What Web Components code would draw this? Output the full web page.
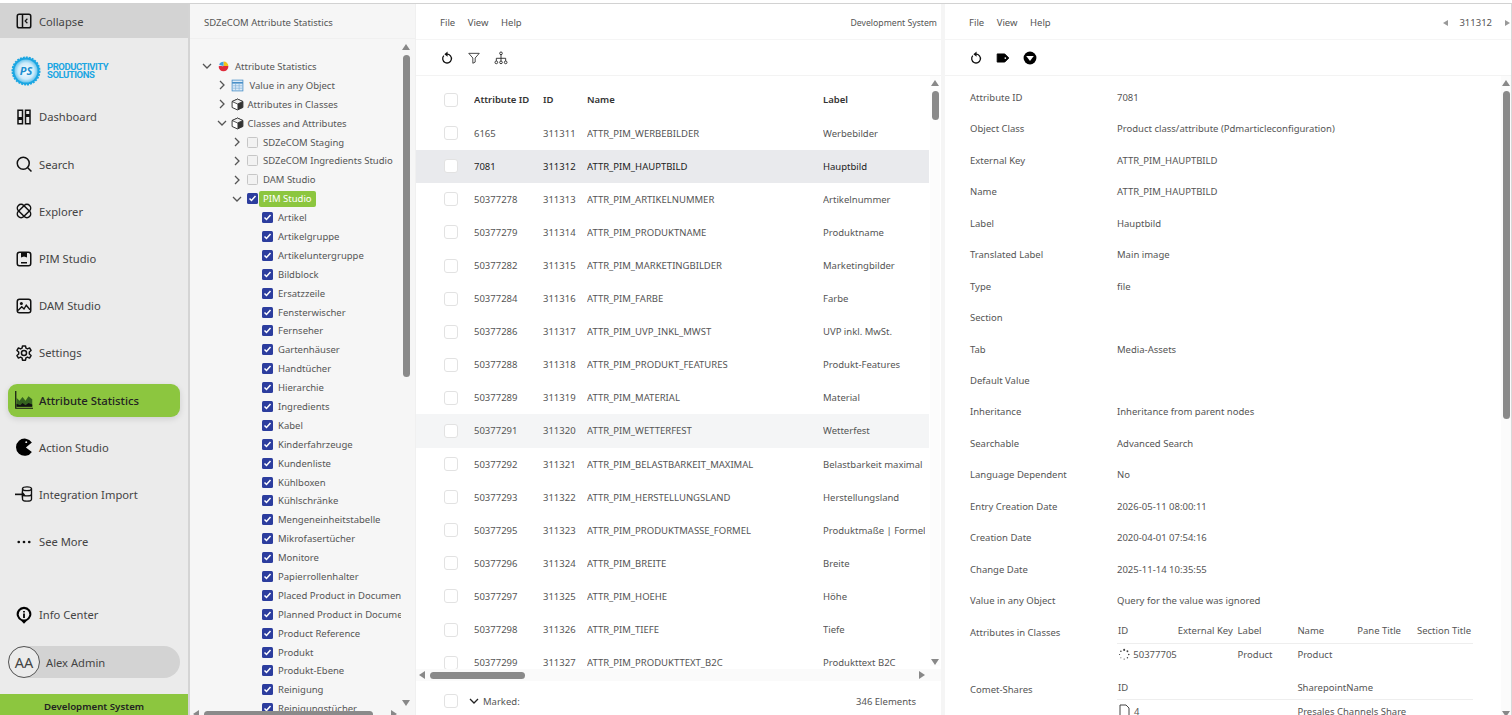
<!DOCTYPE html>
<html>
<head>
<meta charset="utf-8">
<title>Attribute Statistics</title>
<style>
  html, body { margin: 0; height: 100%; overflow: hidden; background: #fff; }
  body { font-family: "Noto Sans", "Open Sans", sans-serif; color: #444; }
  stat-app { height: 715px; }
</style>
</head>
<body>
<stat-app></stat-app>
<script>
const icons = {
  collapse: '<rect x="3" y="3" width="18" height="18" rx="2.5" fill="none" stroke="#111" stroke-width="2"/><path d="M10 3v18" stroke="#111" stroke-width="2"/><path d="M16.5 9l-3 3 3 3" fill="none" stroke="#111" stroke-width="1.6"/>',
  dashboard: '<path d="M4 3h6v10H4zM14 3h6v6h-6zM14 11h6v10h-6zM4 15h6v6H4z" fill="none" stroke="#111" stroke-width="2"/>',
  search: '<circle cx="11" cy="11" r="8" fill="none" stroke="#111" stroke-width="2"/><path d="M17 17l5 5" stroke="#111" stroke-width="2"/>',
  explorer: '<g fill="none" stroke="#111" stroke-width="2"><rect x="1.500" y="7" width="21" height="10" rx="5" transform="rotate(45 12 12)"/><rect x="1.500" y="7" width="21" height="10" rx="5" transform="rotate(-45 12 12)"/></g>',
  pim: '<rect x="3" y="3" width="18" height="18" rx="3" fill="none" stroke="#111" stroke-width="2"/><path d="M8 3h8v7l-4-1.500L8 10zM8 16h8v2H8z" fill="#111"/>',
  dam: '<rect x="3" y="3" width="18" height="18" rx="3" fill="none" stroke="#111" stroke-width="2"/><circle cx="8.500" cy="8.500" r="2" fill="#111"/><path d="M4 18l5-5 3 3 3-5 5 6" fill="none" stroke="#111" stroke-width="1.800"/>',
  settings: '<circle cx="12" cy="12" r="3.400" fill="none" stroke="#111" stroke-width="2"/><path d="M10 2.500h4l.6 3 2 1 2.800-1.300 2 3.400-2.300 2v2.800l2.300 2-2 3.400-2.800-1.300-2 1-.6 3h-4l-.6-3-2-1-2.800 1.300-2-3.400 2.300-2v-2.800l-2.300-2 2-3.400 2.800 1.300 2-1z" fill="none" stroke="#111" stroke-width="2" stroke-linejoin="round"/>',
  stats: '<path d="M1 0v23h23" fill="none" stroke="#111" stroke-width="1.600"/><path d="M2 21V9l4 4 4-5 4 5 4-6 5 4v10z" fill="#35641f"/><path d="M2 21v-4l5 2 3-3 4 3 4-3 5 2v3z" fill="#111"/>',
  action: '<path d="M22.500 6A11.500 11.500 0 1 0 22.500 18.500L14.500 12.500z" fill="#000"/><circle cx="15" cy="5.500" r="1.300" fill="#ebebeb"/>',
  integration: '<ellipse cx="16" cy="5" rx="6" ry="2.500" fill="none" stroke="#111" stroke-width="1.800"/><path d="M10 5v14c0 1.400 2.700 2.500 6 2.500s6-1.100 6-2.500V5M10 12c0 1.400 2.700 2.500 6 2.500s6-1.100 6-2.500" fill="none" stroke="#111" stroke-width="1.800"/><path d="M0 12.500h12" stroke="#111" stroke-width="2.200"/><path d="M9 8.500l4.500 4-4.500 4z" fill="#111"/>',
  more: '<circle cx="5" cy="12" r="1.800" fill="#111"/><circle cx="12" cy="12" r="1.800" fill="#111"/><circle cx="19" cy="12" r="1.800" fill="#111"/>',
  info: '<path d="M12 23.500l-3.500-3.600A9.800 9.800 0 1 1 15.500 19.900z" fill="#000"/><circle cx="12" cy="11" r="7" fill="#ebebeb"/><path d="M10.800 10h2.400v6h-2.400zM10.800 6.500h2.400v2.200h-2.400z" fill="#000"/>',
  reload: '<path d="M6.500 8a7.500 7.500 0 1 0 5.500-2.500h-1" fill="none" stroke="#111" stroke-width="2.200"/><path d="M13 1v9L7.500 5.500z" fill="#111"/>',
  filter: '<path d="M3 4h18l-7 8v7l-4 2v-9z" fill="none" stroke="#222" stroke-width="1.400" stroke-linejoin="round"/>',
  hierarchy: '<g fill="none" stroke="#222" stroke-width="1.500"><circle cx="12" cy="4" r="2.300"/><circle cx="4" cy="19.500" r="2.300"/><circle cx="12" cy="19.500" r="2.300"/><circle cx="20" cy="19.500" r="2.300"/><path d="M12 6.500v10.500M4 17v-4.500h16V17"/></g>',
  tag: '<path d="M2 5h13l7 7-7 7H2z" fill="#000" stroke="#000" stroke-linejoin="round" stroke-width="1.500"/><circle cx="16" cy="12" r="1.500" fill="#fff"/>',
  down: '<circle cx="12" cy="12" r="11" fill="#000"/><path d="M5.500 8.500h13L12 17z" fill="#fff"/>',
  pie: '<path d="M3 12a9 9 0 0 0 18 0c0-2-7-3-9-1s-6-1-9 1z" fill="#df2b3b"/><path d="M12 3a8.500 8.500 0 0 1 9 8l-9 0z" fill="#f1c21b"/><path d="M12 3a8.500 8.500 0 0 0-8 6l8 2z" fill="#3f9fe0"/>',
  grid: '<rect x="2" y="2" width="20" height="20" fill="#dcebf8" stroke="#4a90c8" stroke-width="1.500"/><path d="M2 7h20" stroke="#4a90c8" stroke-width="3"/><path d="M8.500 8v13M15 8v13M3 12.500h18M3 17h18" stroke="#7fb0d8" stroke-width="1.200"/>',
  cube: '<path d="M12 2L22 6.500v11L12 22 2 17.500v-11z" fill="#fff" stroke="#333" stroke-width="1.800" stroke-linejoin="round"/><path d="M2 6.500L12 11l10-4.500L12 2z" fill="#eee" stroke="#333" stroke-width="1.500" stroke-linejoin="round"/><path d="M12 11v11l10-4.500v-11z" fill="#333"/>'
};
const svg = (name, size) => `<svg width="${size}" height="${size}" viewBox="0 0 24 24" aria-hidden="true">${icons[name]}</svg>`;

class NavItem extends HTMLElement {
  constructor() {
    super();
    this.attachShadow({mode: "open"});
  }
  connectedCallback() {
    this.shadowRoot.innerHTML = `
      <style>
        :host { display: flex; align-items: center; height: 33px; margin: 7.100px 8px; padding-left: 7px; border-radius: 9px; gap: 6px; font-size: 11.200px; color: #444; box-sizing: border-box; }
        :host([active]) { background: #8cc63f; color: #222; font-weight: 500; font-size: 11.300px; box-shadow: 0 2px 6px rgba(0,0,0,.12); }
        svg { flex: none; display: block; }
      </style>
      ${svg(this.getAttribute("icon"), 18)}<slot></slot>`;
  }
}
customElements.define("nav-item", NavItem);

class SideBar extends HTMLElement {
  constructor() {
    super();
    this.attachShadow({mode: "open"});
    const nav = [["dashboard","Dashboard"],["search","Search"],["explorer","Explorer"],["pim","PIM Studio"],["dam","DAM Studio"],["settings","Settings"],["stats","Attribute Statistics"],["action","Action Studio"],["integration","Integration Import"],["more","See More"]];
    this.shadowRoot.innerHTML = `
      <style>
        :host { display: flex; flex-direction: column; width: 190px; box-sizing: border-box; background: #ebebeb; border-right: 2px solid #d4d4d4; overflow: hidden; }
        .collapse { height: 34px; flex: none; display: flex; align-items: center; gap: 6px; padding-left: 15px; background: #d3d3d3; font-size: 11.200px; }
        .logo { height: 55.400px; flex: none; display: flex; align-items: center; gap: 6px; padding: 10px 0 0 11px; box-sizing: border-box; }
        .logo b { font: 700 9.500px/7.800px "Roboto", "Noto Sans", sans-serif; color: #1ba6e2; letter-spacing: -.45px; }
        .spring { flex: 1; }
        .user { display: flex; align-items: center; height: 32px; margin: 0 8px 16px; background: #d3d3d3; border-radius: 16px; font-size: 11.200px; gap: 6px; }
        .avatar { width: 30px; height: 30px; border: 1px solid #555; border-radius: 50%; display: flex; align-items: center; justify-content: center; font-size: 14.500px; background: #ebebeb; flex: none; }
        .env { height: 21px; flex: none; background: #8cc63f; color: #222; font-size: 9.700px; font-weight: 600; text-align: center; line-height: 26px; }
        .info { margin-bottom: 15px; }
      </style>
      <div class="collapse">${svg("collapse", 18)}Collapse</div>
      <div class="logo">
        <svg width="30" height="30" viewBox="0 0 30 30" aria-hidden="true">
          <defs><radialGradient id="g"><stop offset="0" stop-color="#fff"/><stop offset=".7" stop-color="#cbeafa"/><stop offset="1" stop-color="#6cc6ee"/></radialGradient></defs>
          <circle cx="15" cy="15" r="13.500" fill="#1ba6e2" stroke="#1ba6e2" stroke-width="2" stroke-dasharray="2 1"/><circle cx="15" cy="15" r="11.500" fill="url(#g)"/>
          <text x="15" y="19" text-anchor="middle" font-family="Noto Sans" font-size="11" font-weight="700" font-style="italic" fill="#1b8fd0">PS</text>
        </svg>
        <b>PRODUCTIVITY<br>SOLUTIONS</b>
      </div>
      ${nav.map(([i, t]) => `<nav-item icon="${i}"${t === "Attribute Statistics" ? " active" : ""}>${t}</nav-item>`).join("")}
      <div class="spring"></div>
      <nav-item class="info" icon="info">Info Center</nav-item>
      <div class="user"><span class="avatar">AA</span>Alex Admin</div>
      <div class="env">Development System</div>`;
  }
}
customElements.define("side-bar", SideBar);

class TreeRow extends HTMLElement {
  constructor() {
    super();
    this.attachShadow({mode: "open"});
  }
  connectedCallback() {
    const level = +this.getAttribute("level");
    const exp = this.getAttribute("exp");
    const icon = this.getAttribute("icon");
    const check = this.getAttribute("check");
    const chev = exp === "open" ? '<path d="M2 4l4 4 4-4"/>' : '<path d="M4 2l4 4-4 4"/>';
    const indent = level === 3 ? 72 : 11 + level * 15;
    const iconGap = icon === "grid" ? 6 : icon === "pie" ? 5 : 4;
    this.shadowRoot.innerHTML = `
      <style>
        :host { display: flex; align-items: center; height: 18.900px; white-space: nowrap; font-size: 9.500px; color: #555; box-sizing: border-box; }
        .exp { width: 12px; height: 12px; flex: none; margin-right: ${level === 1 ? 2.500 : 4}px; }
        .exp path { fill: none; stroke: #555; stroke-width: 1.300; }
        svg.ic { flex: none; margin-right: ${iconGap}px; }
        .cb { width: 11px; height: 11px; flex: none; margin-right: 5px; box-sizing: border-box; border-radius: 1.500px; }
        .off { background: #f2f2f2; border: 1px solid #c6c6c6; }
        .on { background: #2c3d9e; display: flex; }
        :host([sel]) .lab { background: #8cc63f; color: #fff; border-radius: 2px; padding: 0 4px; line-height: 16px; margin-left: -4px; }
      </style>
      <span style="width:${indent}px;flex:none"></span>
      ${exp ? `<svg class="exp" viewBox="0 0 12 12">${chev}</svg>` : ""}
      ${icon ? svg(icon, 13).replace("<svg", '<svg class="ic"') : ""}
      ${check ? `<span class="cb ${check}">${check === "on" ? '<svg viewBox="0 0 11 11" width="11" height="11"><path d="M2.500 5.500l2 2 4-4.500" fill="none" stroke="#fff" stroke-width="1.500"/></svg>' : ""}</span>` : ""}
      <span class="lab"><slot></slot></span>`;
  }
}
customElements.define("tree-row", TreeRow);

class ScrollBar extends HTMLElement {
  constructor() {
    super();
    this.attachShadow({mode: "open"});
  }
  connectedCallback() {
    const h = this.hasAttribute("horizontal");
    const before = this.getAttribute("before");
    const size = this.getAttribute("size");
    const tri = h
      ? ['<path d="M7 0v8L1 4z" fill="#888"/>', '<path d="M1 0v8l6-4z" fill="#888"/>']
      : ['<path d="M0 7h8L4 1z" fill="#888"/>', '<path d="M0 1h8L4 7z" fill="#888"/>'];
    this.shadowRoot.innerHTML = `
      <style>
        :host { display: flex; flex: none; flex-direction: ${h ? "row" : "column"}; align-items: center; justify-content: space-between; ${h ? "height: 8px" : "width: 8px"}; }
        .track { flex: 1; align-self: stretch; display: flex; flex-direction: ${h ? "row" : "column"}; ${h ? "padding: 0 4px" : "padding: 4px 0"}; min-${h ? "width" : "height"}: 0; }
        .thumb { background: #8a8a8a; border-radius: 4px; flex: none; ${h ? `width:${size}px;margin-left:${before}px;height:7px;margin-top:.5px` : `height:${size}px;margin-top:${before}px;width:7px;margin-left:.5px`}; }
        svg { flex: none; display: block; }
      </style>
      <svg width="8" height="8" viewBox="0 0 8 8">${tri[0]}</svg>
      <div class="track"><div class="thumb"></div></div>
      <svg width="8" height="8" viewBox="0 0 8 8">${tri[1]}</svg>`;
  }
}
customElements.define("scroll-bar", ScrollBar);

class TreePanel extends HTMLElement {
  constructor() {
    super();
    this.attachShadow({mode: "open"});
    const items = ["Artikel","Artikelgruppe","Artikeluntergruppe","Bildblock","Ersatzzeile","Fensterwischer","Fernseher","Gartenhäuser","Handtücher","Hierarchie","Ingredients","Kabel","Kinderfahrzeuge","Kundenliste","Kühlboxen","Kühlschränke","Mengeneinheitstabelle","Mikrofasertücher","Monitore","Papierrollenhalter","Placed Product in Document","Planned Product in Document","Product Reference","Produkt","Produkt-Ebene","Reinigung","Reinigungstücher"];
    this.shadowRoot.innerHTML = `
      <style>
        :host { display: flex; flex-direction: column; width: 226px; flex: none; background: #f6f6f6; overflow: hidden; box-sizing: border-box; border-right: 1px solid #f0f0f0; }
        .head { height: 35px; flex: none; display: flex; align-items: center; padding: 2px 0 0 14px; font-size: 9.500px; color: #555; border-bottom: 1px solid #f0f0f0; box-sizing: border-box; }
        .mid { height: 671.500px; flex: none; display: flex; }
        .tree { width: 211px; flex: none; overflow: hidden; padding-top: 18px; box-sizing: border-box; }
        .v { margin: 4px 0 0 1px; height: 664px; }
        .h { margin: 0 17px 0 2px; height: 7px; }
      </style>
      <div class="head">SDZeCOM Attribute Statistics</div>
      <div class="mid">
        <div class="tree">
          <tree-row level="0" exp="open" icon="pie">Attribute Statistics</tree-row>
          <tree-row level="1" exp="closed" icon="grid">Value in any Object</tree-row>
          <tree-row level="1" exp="closed" icon="cube">Attributes in Classes</tree-row>
          <tree-row level="1" exp="open" icon="cube">Classes and Attributes</tree-row>
          <tree-row level="2" exp="closed" check="off">SDZeCOM Staging</tree-row>
          <tree-row level="2" exp="closed" check="off">SDZeCOM Ingredients Studio</tree-row>
          <tree-row level="2" exp="closed" check="off">DAM Studio</tree-row>
          <tree-row level="2" exp="open" check="on" sel>PIM Studio</tree-row>
          ${items.map(t => `<tree-row level="3" check="on">${t}</tree-row>`).join("")}
        </div>
        <scroll-bar class="v" before="0" size="322"></scroll-bar>
      </div>
      <scroll-bar class="h" horizontal before="0" size="169"></scroll-bar>`;
  }
}
customElements.define("tree-panel", TreePanel);

class PanelBar extends HTMLElement {
  constructor() {
    super();
    this.attachShadow({mode: "open"});
  }
  connectedCallback() {
    const tools = (this.getAttribute("tools") || "").split(" ");
    this.shadowRoot.innerHTML = `
      <style>
        :host { display: block; flex: none; }
        .menu { height: 36px; display: flex; align-items: center; gap: 12.500px; padding: 2px 4px 0 24px; font-size: 9.500px; color: #555; border-bottom: 1px solid #f5f5f5; box-sizing: border-box; }
        .end { margin-left: auto; display: flex; align-items: center; }
        .tools { height: 36px; display: flex; align-items: center; gap: 13px; padding-left: 24px; border-bottom: 1px solid #f3f3f3; box-sizing: border-box; }
      </style>
      <div class="menu"><span>File</span><span>View</span><span>Help</span><span class="end"><slot></slot></span></div>
      <div class="tools">${tools.map(t => svg(t, 14)).join("")}</div>`;
  }
}
customElements.define("panel-bar", PanelBar);

class CheckBox extends HTMLElement {
  constructor() {
    super();
    this.attachShadow({mode: "open"}).innerHTML = `
      <style>:host { display: block; width: 14px; height: 14px; box-sizing: border-box; background: #fff; border: 1.500px solid #e2e2e2; border-radius: 3px; }</style>`;
  }
}
customElements.define("check-box", CheckBox);

class AttrRow extends HTMLElement {
  constructor() {
    super();
    this.attachShadow({mode: "open"});
  }
  connectedCallback() {
    const c = this.getAttribute("cells").split("|");
    // the label itself holds a pipe, so everything past the fourth cell belongs to it
    const cells = c.slice(0, 3).concat(c.slice(3).join(" | "));
    this.shadowRoot.innerHTML = `
      <style>
        :host { display: grid; grid-template-columns: 30px 69px 44px 236px 102px; align-items: center; height: 33.100px; padding-left: 28px; font-size: 9.500px; color: #555; white-space: nowrap; overflow: hidden; flex: none; }
        :host([sel]) { background: #e9eaed; color: #222; }
        :host([hov]) { background: #f4f5f6; }
        :host([head]) { color: #333; font-weight: 600; }
        :host([head]) span { position: relative; top: -.5px; }
        span { overflow: hidden; }
      </style>
      <check-box></check-box>${cells.map(t => `<span>${t}</span>`).join("")}`;
  }
}
customElements.define("attr-row", AttrRow);

class ListPanel extends HTMLElement {
  constructor() {
    super();
    this.attachShadow({mode: "open"});
    const rows = [
      ["6165","311311","ATTR_PIM_WERBEBILDER","Werbebilder"],["7081","311312","ATTR_PIM_HAUPTBILD","Hauptbild"],
      ["50377278","311313","ATTR_PIM_ARTIKELNUMMER","Artikelnummer"],["50377279","311314","ATTR_PIM_PRODUKTNAME","Produktname"],
      ["50377282","311315","ATTR_PIM_MARKETINGBILDER","Marketingbilder"],["50377284","311316","ATTR_PIM_FARBE","Farbe"],
      ["50377286","311317","ATTR_PIM_UVP_INKL_MWST","UVP inkl. MwSt."],["50377288","311318","ATTR_PIM_PRODUKT_FEATURES","Produkt-Features"],
      ["50377289","311319","ATTR_PIM_MATERIAL","Material"],["50377291","311320","ATTR_PIM_WETTERFEST","Wetterfest"],
      ["50377292","311321","ATTR_PIM_BELASTBARKEIT_MAXIMAL","Belastbarkeit maximal"],["50377293","311322","ATTR_PIM_HERSTELLUNGSLAND","Herstellungsland"],
      ["50377295","311323","ATTR_PIM_PRODUKTMASSE_FORMEL","Produktmaße | Formel"],["50377296","311324","ATTR_PIM_BREITE","Breite"],
      ["50377297","311325","ATTR_PIM_HOEHE","Höhe"],["50377298","311326","ATTR_PIM_TIEFE","Tiefe"],["50377299","311327","ATTR_PIM_PRODUKTTEXT_B2C","Produkttext B2C"]
    ];
    this.shadowRoot.innerHTML = `
      <style>
        :host { display: flex; flex-direction: column; width: 525px; flex: none; background: #fff; overflow: hidden; }
        .body { height: 593px; flex: none; display: flex; }
        .table { width: 513px; flex: none; overflow: hidden; display: flex; flex-direction: column; padding-top: 7.500px; box-sizing: border-box; height: 593px; }
        .v { height: 587px; padding-top: 3px; margin-left: 2px; background: #fcfcfc; box-shadow: 1px 0 0 #fcfcfc, -1px 0 0 #fcfcfc; }
        .h { padding: 2px 15px 2px 2px; background: #fafafa; }
        .foot { height: 37px; flex: none; display: flex; align-items: center; padding: 3px 25px 0 28px; font-size: 9.500px; color: #555; box-sizing: border-box; }
        .foot svg { margin: 0 4px 0 11px; }
        .foot .n { margin-left: auto; }
      </style>
      <panel-bar tools="reload filter hierarchy"><span style="font-size:8.700px">Development System</span></panel-bar>
      <div class="body">
        <div class="table">
          <attr-row head cells="Attribute ID|ID|Name|Label"></attr-row>
          ${rows.map((r, i) => `<attr-row cells="${r.join("|")}"${i === 1 ? " sel" : i === 9 ? " hov" : ""}></attr-row>`).join("")}
        </div>
        <scroll-bar class="v" before="0" size="29"></scroll-bar>
      </div>
      <scroll-bar class="h" horizontal before="0" size="95"></scroll-bar>
      <div class="foot"><check-box></check-box><svg width="10" height="10" viewBox="0 0 10 10"><path d="M1 3l4 4 4-4" fill="none" stroke="#222" stroke-width="1.300"/></svg>Marked:<span class="n">346 Elements</span></div>`;
  }
}
customElements.define("list-panel", ListPanel);

class DetailRow extends HTMLElement {
  constructor() {
    super();
    this.attachShadow({mode: "open"});
  }
  connectedCallback() {
    this.shadowRoot.innerHTML = `
      <style>
        :host { display: grid; grid-template-columns: 147px 1fr; align-items: center; min-height: 31.450px; font-size: 9.500px; color: #555; flex: none; }
        :host(.sub) { align-items: start; min-height: 56.600px; }
        :host(.sub) .l { line-height: 31.450px; }
        .v { white-space: nowrap; }
      </style>
      <div class="l">${this.getAttribute("label")}</div><div class="v"><slot></slot></div>`;
  }
}
customElements.define("detail-row", DetailRow);

class SubTable extends HTMLElement {
  constructor() {
    super();
    this.attachShadow({mode: "open"});
  }
  connectedCallback() {
    const head = this.getAttribute("head").split("|");
    const row = this.getAttribute("row").split("|");
    const cell = (t, i) => {
      if (i === 0 && t.startsWith("~")) {
        return `<span class="first"><svg width="13" height="13" viewBox="0 0 12 12"><g fill="#444"><circle cx="6" cy="1.500" r="1"/><circle cx="9.200" cy="2.800" r=".9"/><circle cx="10.500" cy="6" r=".8"/><circle cx="9.200" cy="9.200" r=".7"/><circle cx="6" cy="10.500" r=".6"/><circle cx="2.800" cy="9.200" r=".5"/><circle cx="1.500" cy="6" r=".6"/><circle cx="2.800" cy="2.800" r=".8"/></g></svg>${t.slice(1)}</span>`;
      }
      if (i === 0 && t.startsWith("^")) {
        return `<span class="first"><svg width="13" height="14" viewBox="0 0 12 14"><path d="M1.500 1h6l3 3v9h-9z" fill="#fff" stroke="#444"/></svg>${t.slice(1)}</span>`;
      }
      return `<span>${t}</span>`;
    };
    this.shadowRoot.innerHTML = `
      <style>
        :host { display: block; width: 356px; font-size: 9.500px; color: #555; margin-top: 1.800px; }
        .r { display: grid; grid-template-columns: repeat(6, 59.800px); align-items: center; white-space: nowrap; }
        .hd { height: 25px; border-bottom: 1px solid #eee; box-sizing: border-box; }
        .bd { height: 22px; }
        .first { display: inline-flex; align-items: center; gap: 3px; }
        span { padding-left: 1px; }
      </style>
      <div class="r hd">${head.map(t => `<span>${t}</span>`).join("")}</div>
      <div class="r bd">${row.map(cell).join("")}</div>`;
  }
}
customElements.define("sub-table", SubTable);

class DetailPanel extends HTMLElement {
  constructor() {
    super();
    this.attachShadow({mode: "open"});
    const f = [["Attribute ID","7081"],["Object Class","Product class/attribute (Pdmarticleconfiguration)"],["External Key","ATTR_PIM_HAUPTBILD"],["Name","ATTR_PIM_HAUPTBILD"],["Label","Hauptbild"],["Translated Label","Main image"],["Type","file"],["Section",""],["Tab","Media-Assets"],["Default Value",""],["Inheritance","Inheritance from parent nodes"],["Searchable","Advanced Search"],["Language Dependent","No"],["Entry Creation Date","2026-05-11 08:00:11"],["Creation Date","2020-04-01 07:54:16"],["Change Date","2025-11-14 10:35:55"],["Value in any Object","Query for the value was ignored"]];
    this.shadowRoot.innerHTML = `
      <style>
        :host { display: flex; flex-direction: column; flex: 1; min-width: 0; background: #fff; overflow: hidden; border-right: 1.500px solid #d8d8d8; }
        .body { flex: 1; display: flex; min-height: 0; }
        .form { flex: 1; min-width: 0; padding: 5.800px 0 0 25px; overflow: hidden; display: flex; flex-direction: column; }
        .v { height: 639px; padding: 3px 1px 0; background: #fbfbfb; }
        .pager { display: flex; align-items: center; gap: 13px; font-size: 9.500px; margin-right: -3px; }
        .pager .l { margin-right: -2px; }
        .tri { width: 0; height: 0; border: 3.500px solid transparent; }
        .first-sub { margin-top: .7px; }
      </style>
      <panel-bar tools="reload tag down"><span class="pager"><span class="tri l" style="border-right:5px solid #999;border-left:0"></span>311312<span class="tri" style="border-left:5px solid #999;border-right:0"></span></span></panel-bar>
      <div class="body">
        <div class="form">
          ${f.map(([l, v]) => `<detail-row label="${l}">${v}</detail-row>`).join("")}
          <detail-row class="sub first-sub" label="Attributes in Classes"><sub-table head="ID|External Key|Label|Name|Pane Title|Section Title" row="~50377705||Product|Product||"></sub-table></detail-row>
          <detail-row class="sub" label="Comet-Shares"><sub-table head="ID|||SharepointName||" row="^4|||Presales Channels Share||"></sub-table></detail-row>
        </div>
        <scroll-bar class="v" before="0" size="328"></scroll-bar>
      </div>`;
  }
}
customElements.define("detail-panel", DetailPanel);

class StatApp extends HTMLElement {
  constructor() {
    super();
    this.attachShadow({mode: "open"}).innerHTML = `
      <style>
        :host { display: flex; flex-direction: column; box-sizing: border-box; padding-top: 3px; }
        .main { flex: 1; min-height: 0; display: flex; border-top: 1.500px solid #d2d2d2; }
        .gap { width: 4px; flex: none; background: #f5f5f5; }
      </style>
      <div class="main">
        <side-bar></side-bar>
        <tree-panel></tree-panel>
        <list-panel></list-panel>
        <div class="gap"></div>
        <detail-panel></detail-panel>
      </div>`;
  }
}
customElements.define("stat-app", StatApp);
</script>
</body>
</html>
